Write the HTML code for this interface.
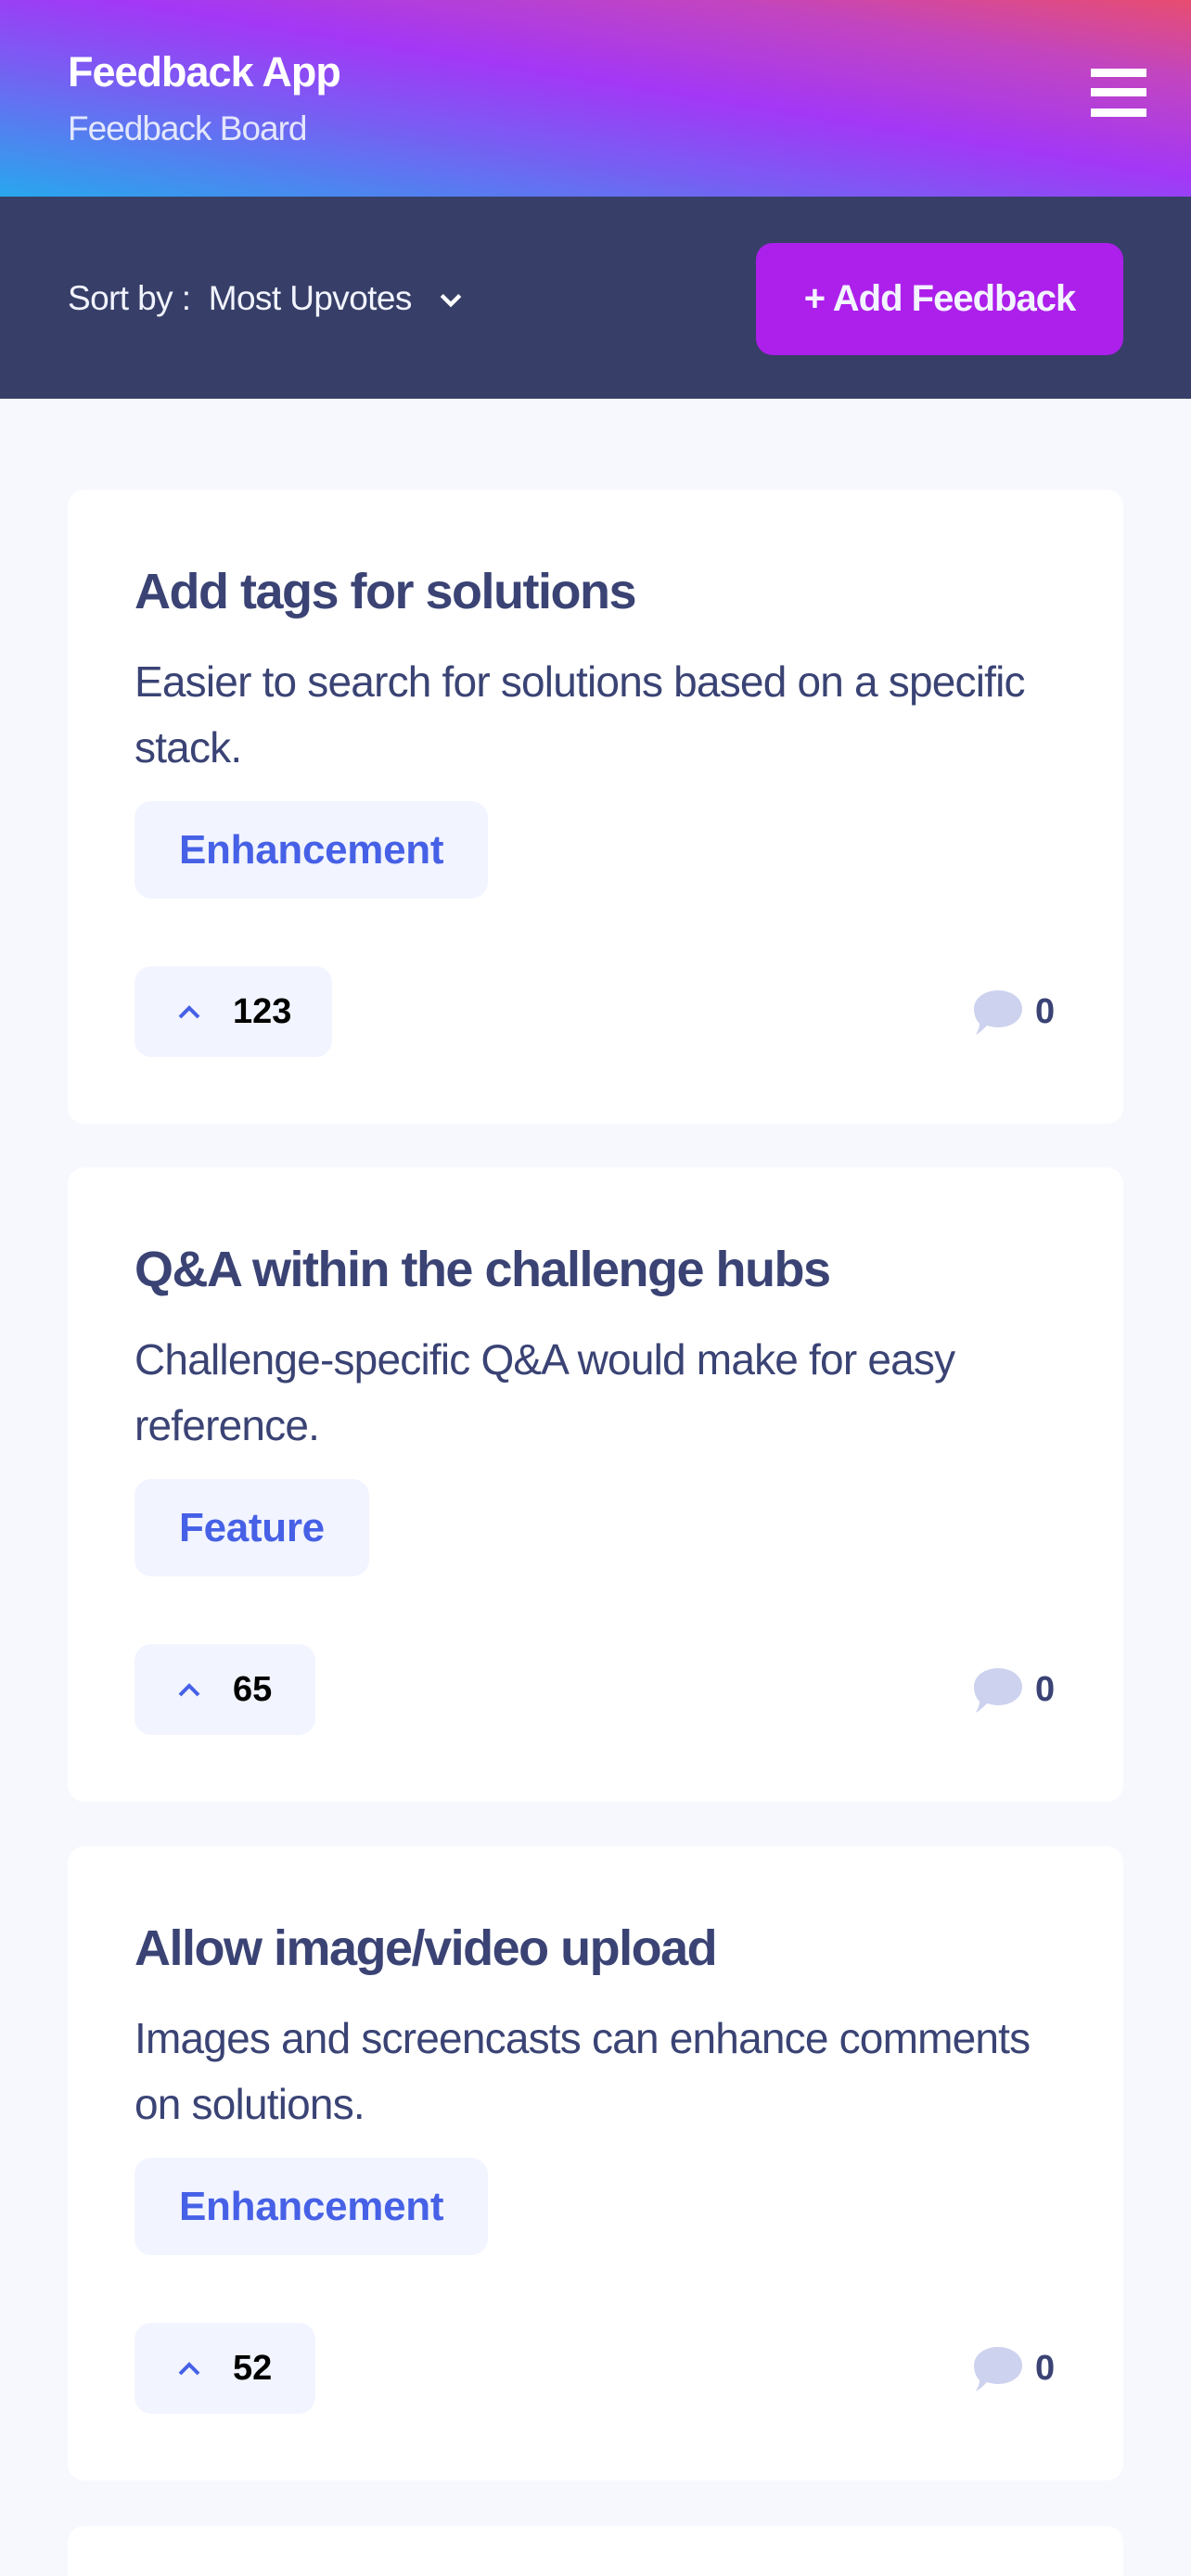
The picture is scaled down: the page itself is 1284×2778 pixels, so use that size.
<!DOCTYPE html>
<html style="width:1284px;height:2778px;overflow:hidden"><head><meta charset="utf-8"><style>
*{margin:0;padding:0;box-sizing:border-box}
body{width:1284px;height:2778px;background:#F7F8FD;font-family:"Liberation Sans",sans-serif;position:relative;overflow:hidden}
.hdr{position:absolute;left:0;top:0;width:1284px;height:212px;background:linear-gradient(to top right,#28A7ED 0%,#7a5cf3 35%,#A337F6 55%,#C245C0 80%,#E84D70 100%)}
.t1{position:absolute;left:73px;top:52px;color:#fff;font-weight:bold;font-size:45px;letter-spacing:-1px}
.t2{position:absolute;left:73px;top:118px;color:#F2F4FF;font-size:37px;letter-spacing:-1px;opacity:.9}
.ham{position:absolute;left:1176px;width:60px;height:9px;background:#fff}
.bar{position:absolute;left:0;top:212px;width:1284px;height:218px;background:#373F68}
.sort{position:absolute;left:73px;top:89px;color:#F2F4FF;font-size:37px;letter-spacing:-.6px}
.btn{position:absolute;left:815px;top:50px;width:396px;height:121px;border-radius:18px;background:#AD1FEA;color:#F2F4FF;font-weight:bold;font-size:40px;text-align:center;line-height:121px;letter-spacing:-1px}
.card{position:absolute;left:73px;width:1138px;height:684px;background:#fff;border-radius:18px}
.ct{position:absolute;left:72px;top:79px;color:#3A4374;font-weight:bold;font-size:54px;letter-spacing:-1.5px}
.cd{position:absolute;left:72px;top:172px;width:1010px;font-size:46px;line-height:71px;letter-spacing:-.8px;color:#3A4374}
.tag{position:absolute;left:72px;top:336px;height:105px;padding:0 48px;border-radius:18px;background:#F2F4FF;color:#4661E6;font-weight:bold;font-size:44px;line-height:105px;letter-spacing:-.3px}
.up{position:absolute;left:72px;top:514px;height:98px;border-radius:18px;background:#F2F4FF;color:#000;font-weight:bold;font-size:38px;line-height:98px}
.up svg{position:absolute;left:46px;top:40px}
.up span{position:absolute;left:106px}
.cm{position:absolute;left:975px;top:538px;width:56px;height:52px}
.cn{position:absolute;left:1043px;top:514px;line-height:98px;font-weight:bold;font-size:38px;color:#3A4374}
</style></head><body>
<div class="hdr">
<div class="t1">Feedback App</div>
<div class="t2">Feedback Board</div>
<div class="ham" style="top:74px"></div>
<div class="ham" style="top:95px"></div>
<div class="ham" style="top:117px"></div>
</div>
<div class="bar">
<div class="sort">Sort by :&nbsp; Most Upvotes&nbsp;&nbsp; <svg width="26" height="18" viewBox="0 0 24 16" style="vertical-align:middle"><path d="M3 3l9 9 9-9" stroke="#fff" stroke-width="4" fill="none"/></svg></div>
<div class="btn">+ Add Feedback</div>
</div>

<div class="card" style="top:528px">
<div class="ct">Add tags for solutions</div>
<div class="cd">Easier to search for solutions based on a specific stack.</div>
<div class="tag">Enhancement</div>
<div class="up" style="width:213px"><svg width="26" height="18" viewBox="0 0 26 18"><path d="M3 15l10-10 10 10" stroke="#4661E6" stroke-width="4" fill="none"/></svg><span>123</span></div>
<svg class="cm" viewBox="0 0 56 52"><path d="M28 2C42 2 54 10 54 22 54 34 42 42 28 42 24 42 20 41 16 40 12 44 8 48 4 50 6 46 8 42 8 38 4 34 2 28 2 22 2 10 14 2 28 2Z" fill="#CDD2EE"/></svg>
<div class="cn">0</div>
</div>

<div class="card" style="top:1259px">
<div class="ct">Q&amp;A within the challenge hubs</div>
<div class="cd">Challenge-specific Q&amp;A would make for easy reference.</div>
<div class="tag">Feature</div>
<div class="up" style="width:195px"><svg width="26" height="18" viewBox="0 0 26 18"><path d="M3 15l10-10 10 10" stroke="#4661E6" stroke-width="4" fill="none"/></svg><span>65</span></div>
<svg class="cm" viewBox="0 0 56 52"><path d="M28 2C42 2 54 10 54 22 54 34 42 42 28 42 24 42 20 41 16 40 12 44 8 48 4 50 6 46 8 42 8 38 4 34 2 28 2 22 2 10 14 2 28 2Z" fill="#CDD2EE"/></svg>
<div class="cn">0</div>
</div>

<div class="card" style="top:1991px">
<div class="ct">Allow image/video upload</div>
<div class="cd">Images and screencasts can enhance comments on solutions.</div>
<div class="tag">Enhancement</div>
<div class="up" style="width:195px"><svg width="26" height="18" viewBox="0 0 26 18"><path d="M3 15l10-10 10 10" stroke="#4661E6" stroke-width="4" fill="none"/></svg><span>52</span></div>
<svg class="cm" viewBox="0 0 56 52"><path d="M28 2C42 2 54 10 54 22 54 34 42 42 28 42 24 42 20 41 16 40 12 44 8 48 4 50 6 46 8 42 8 38 4 34 2 28 2 22 2 10 14 2 28 2Z" fill="#CDD2EE"/></svg>
<div class="cn">0</div>
</div>

<div class="card" style="top:2724px;height:54px;border-radius:18px 18px 0 0"></div>
</body></html>
